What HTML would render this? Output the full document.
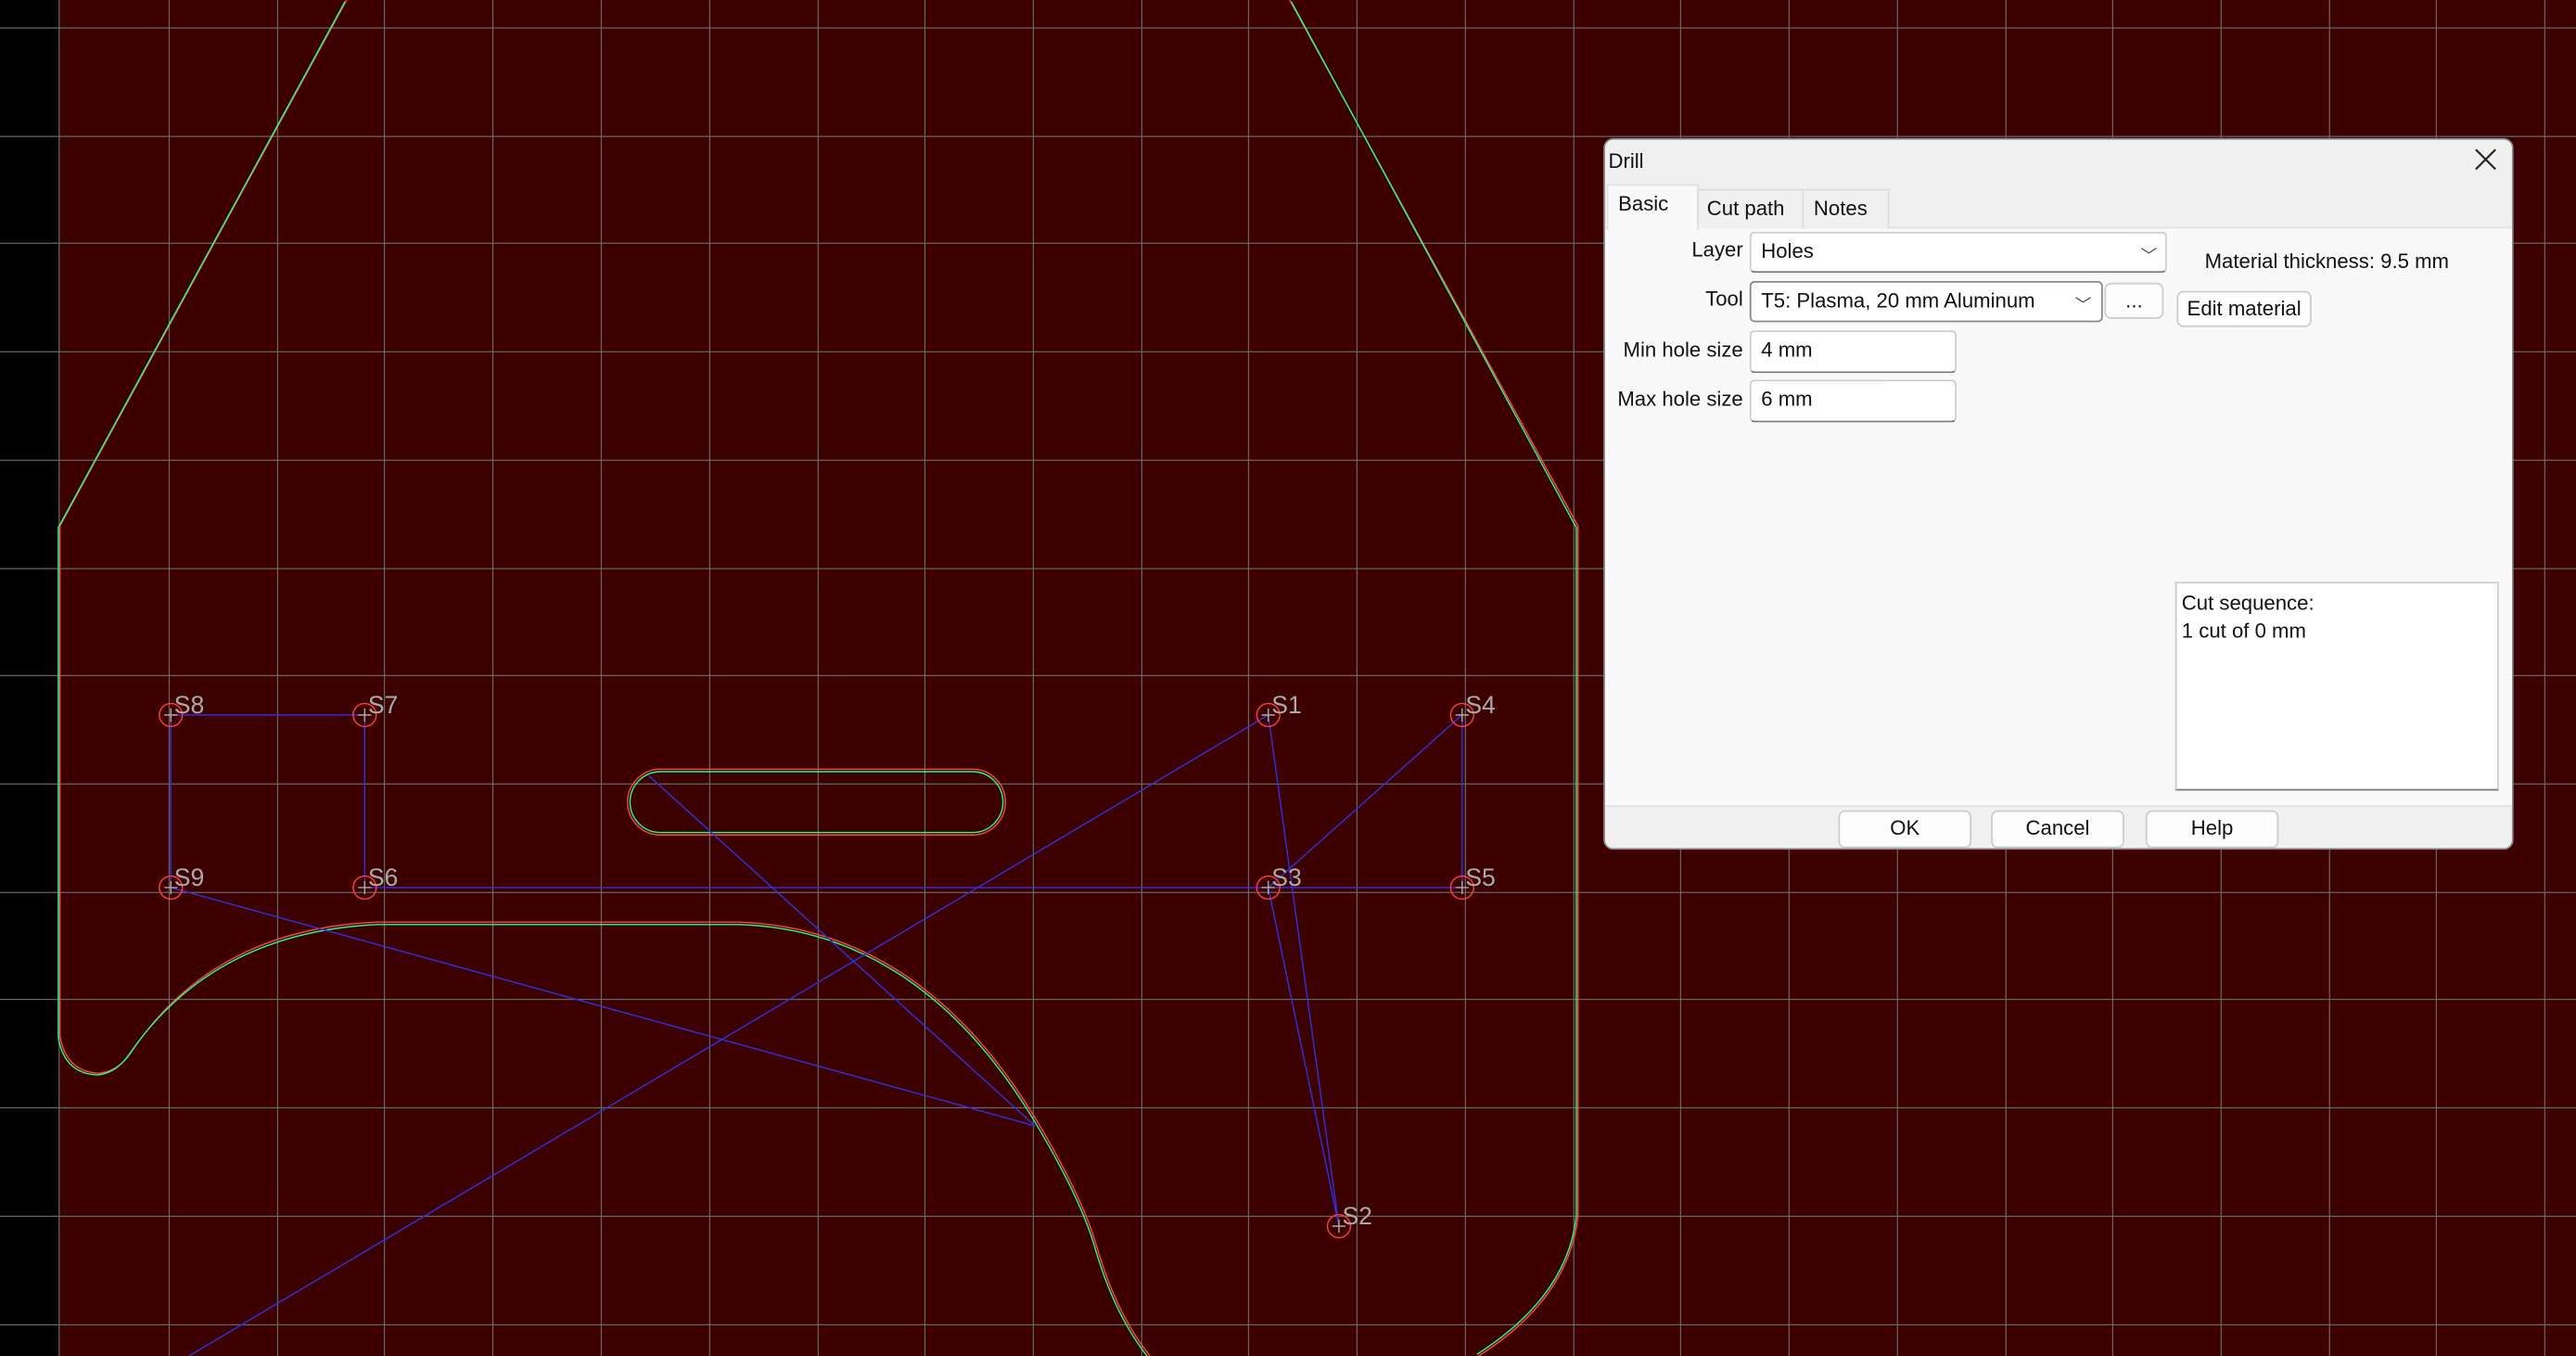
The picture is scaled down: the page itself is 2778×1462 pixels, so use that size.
<!DOCTYPE html>
<html><head><meta charset="utf-8"><style>
html,body{margin:0;padding:0;width:2778px;height:1462px;overflow:hidden;background:#3c0000}
#w{position:absolute;left:0;top:0;width:1568px;height:825px;transform:scale(1.77168,1.77212);transform-origin:0 0;font-family:"Liberation Sans",sans-serif}
.dlg{position:absolute;left:976px;top:84px;width:554px;height:433px;background:#f0f0f0;border-radius:6px;border:1px solid #888;box-sizing:border-box;overflow:hidden;font-size:12.5px;color:#111}
.a{position:absolute}
.box{position:absolute;background:#fff;border:1px solid #ccc;border-bottom:1px solid #777;border-radius:3px;box-sizing:border-box;padding:4px 0 0 6px;font-size:12.5px}
.btn{position:absolute;background:#fdfdfd;border:1px solid #ccc;border-radius:4px;box-sizing:border-box;text-align:center;font-size:12.5px;line-height:20px}
.lab{position:absolute;text-align:right;font-size:12.5px}
.chev{position:absolute;font-size:10px;color:#444}
</style></head><body><div id="w">
<svg width="1568" height="825" viewBox="0 0 1568 825" style="position:absolute;left:0;top:0">
<rect x="0" y="0" width="1568" height="825" fill="#3c0000"/>
<rect x="0" y="0" width="36" height="825" fill="#000"/>
<g stroke="#666" stroke-width="0.7">
<path d="M36 0V825M103 0V825M169 0V825M234 0V825M300 0V825M366 0V825M432 0V825M498 0V825M563 0V825M629 0V825M695 0V825M760 0V825M826 0V825M892 0V825M958 0V825M1023 0V825M1089 0V825M1155 0V825M1221 0V825M1286 0V825M1352 0V825M1418 0V825M1483 0V825M1549 0V825"/>
<path d="M0 17H1568M0 83H1568M0 148H1568M0 214H1568M0 280H1568M0 346H1568M0 411H1568M0 477H1568M0 543H1568M0 608H1568M0 674H1568M0 740H1568M0 806H1568"/>
</g>
<g fill="none" stroke-width="0.8">
<path stroke="#ff4545" d="M211 0L36.5 320V630Q40 652 60 653Q72 652 80 640Q130 565 230 561H450Q560 565 630 680Q660 730 668 760Q680 800 700 825M785 0L960.5 320V740Q955 790 900 825M402 468H592A20 20 0 0 1 592 508H402A20 20 0 0 1 402 468Z"/>
<path stroke="#20ff80" d="M210 1L35.5 321V631Q39 653 59 654Q71 653 79 641Q130 567 230 562.5H450Q559 566 629 681Q659 731 667 761Q679 801 699 826M786 1L959.5 321V740Q954 789 899 824M402 469.5H592A18.5 18.5 0 0 1 592 506.5H402A18.5 18.5 0 0 1 402 469.5Z"/>
</g>
<g stroke="#3030e0" stroke-width="0.8" fill="none">
<path d="M104 435H222V540H772H890V435L772 540L815 746L772 435L115 825M104 435V540L630 685L395 472"/>
</g>
<g fill="none" stroke="#ff4040" stroke-width="0.8">
<circle cx="104" cy="435" r="7"/><circle cx="222" cy="435" r="7"/><circle cx="104" cy="540" r="7"/><circle cx="222" cy="540" r="7"/>
<circle cx="772" cy="435" r="7"/><circle cx="890" cy="435" r="7"/><circle cx="772" cy="540" r="7"/><circle cx="890" cy="540" r="7"/><circle cx="815" cy="746" r="7"/>
</g>
<g stroke="#aaa" stroke-width="0.8">
<path d="M100 435h8M104 431v8M218 435h8M222 431v8M100 540h8M104 536v8M218 540h8M222 536v8M768 435h8M772 431v8M886 435h8M890 431v8M768 540h8M772 536v8M886 540h8M890 536v8M811 746h8M815 742v8"/>
</g>
<g fill="#aaa" font-family="Liberation Sans,sans-serif" font-size="15">
<text x="106" y="434">S8</text><text x="224" y="434">S7</text><text x="106" y="539">S9</text><text x="224" y="539">S6</text>
<text x="774" y="434">S1</text><text x="892" y="434">S4</text><text x="774" y="539">S3</text><text x="892" y="539">S5</text><text x="817" y="745">S2</text>
</g>
</svg>
<div class="dlg">
<div class="a" style="left:2px;top:6px">Drill</div>
<svg class="a" style="left:529px;top:5px" width="14" height="14"><path d="M1 1L13 13M13 1L1 13" stroke="#222" stroke-width="1.2"/></svg>
<div class="a" style="left:0;top:53px;width:554px;height:351px;background:#f9f9f9;border-top:1px solid #e0e0e0;border-bottom:1px solid #e0e0e0"></div>
<div class="a" style="left:1px;top:27px;width:54px;height:27px;background:#f9f9f9;border:1px solid #e0e0e0;border-bottom:none"></div>
<div class="a" style="left:8px;top:32px">Basic</div>
<div class="a" style="left:56px;top:30px;width:63px;height:23px;border:1px solid #ddd;border-bottom:none;background:#f0f0f0"></div>
<div class="a" style="left:62px;top:35px">Cut path</div>
<div class="a" style="left:120px;top:30px;width:51px;height:23px;border:1px solid #ddd;border-bottom:none;background:#f0f0f0"></div>
<div class="a" style="left:127px;top:35px">Notes</div>
<div class="lab" style="left:20px;width:64px;top:60px">Layer</div>
<div class="box" style="left:88px;top:56px;width:254px;height:25px">Holes</div><div class="chev" style="left:326px;top:62px">﹀</div>
<div class="lab" style="left:20px;width:64px;top:90px">Tool</div>
<div class="box" style="left:88px;top:86px;width:215px;height:25px;border-color:#888">T5: Plasma, 20 mm Aluminum</div><div class="chev" style="left:286px;top:92px">﹀</div>
<div class="btn" style="left:304px;top:87px;width:36px;height:22px">...</div>
<div class="a" style="left:365px;top:67px">Material thickness: 9.5 mm</div>
<div class="btn" style="left:348px;top:92px;width:82px;height:22px">Edit material</div>
<div class="lab" style="left:0;width:84px;top:121px">Min hole size</div>
<div class="box" style="left:88px;top:116px;width:126px;height:26px">4 mm</div>
<div class="lab" style="left:0;width:84px;top:151px">Max hole size</div>
<div class="box" style="left:88px;top:146px;width:126px;height:26px">6 mm</div>
<div class="box" style="left:347px;top:269px;width:197px;height:127px;padding:4px 0 0 3px;line-height:17px;border-radius:0">Cut sequence:<br>1 cut of 0 mm</div>
<div class="btn" style="left:142px;top:408px;width:81px;height:23px">OK</div>
<div class="btn" style="left:235px;top:408px;width:81px;height:23px">Cancel</div>
<div class="btn" style="left:329px;top:408px;width:81px;height:23px">Help</div>
</div>
</div></body></html>
